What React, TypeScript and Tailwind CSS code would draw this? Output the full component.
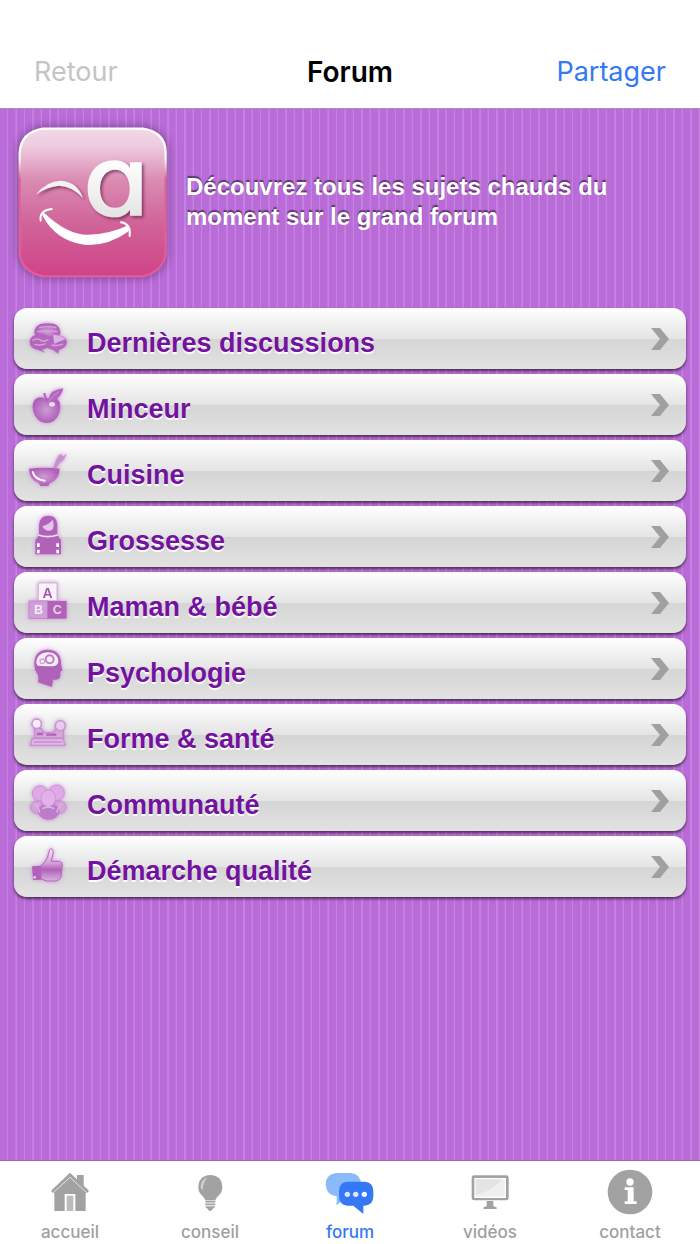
import type { ReactNode } from "react";

type Topic = { label: string; icon: ReactNode };
type Tab = { label: string; icon: ReactNode; active?: boolean };

function TopicIcon({ viewBox, children }: { viewBox: string; children: ReactNode }) {
  return (
    <svg
      viewBox={viewBox}
      aria-hidden="true"
      className="size-10 shrink-0 overflow-visible drop-shadow-[0_0_2px_#c88fd6]"
    >
      <g filter="url(#soften)">{children}</g>
    </svg>
  );
}

function TabIcon({ viewBox, children }: { viewBox: string; children: ReactNode }) {
  return (
    <svg viewBox={viewBox} aria-hidden="true" className="size-[46px] overflow-visible">
      {children}
    </svg>
  );
}

const topics: Topic[] = [
  {
    label: "Dernières discussions",
    icon: (
      <TopicIcon viewBox="85 56 120 120">
        <path d="M104 98q0-29 40-29q38 0 38 29q-6 22-38 22t-40-22z" fill="url(#orchid)" />
        <path d="M90 125q0-22 34-25q30 2 30 24q-2 20-28 24l12 10l-22-9q-26-4-26-24z" fill="#b468bd" />
        <path d="M138 126q4-22 32-22q32 2 32 22q-2 18-24 23l-2 11l-16-11q-22-3-22-23z" fill="#b468bd" />
        <path d="M160 104q22-2 38 12l-34 14z" fill="#dcb2e4" />
        <path
          d="M118 82q28-6 52 0M112 94q30-5 62 0M98 120q16-7 26 0t22-3M104 132q20 5 34-2M156 134q18 4 34-3"
          fill="none"
          stroke="#d5a6dc"
          strokeWidth="4"
        />
      </TopicIcon>
    ),
  },
  {
    label: "Minceur",
    icon: (
      <TopicIcon viewBox="85 254 120 120">
        <path
          d="M139 296q-20-12-34 2q-10 14-4 36q10 32 38 34q30 0 40-30q8-28-6-42q-16-9-34 0z"
          fill="url(#orchid)"
        />
        <path d="M148 304q-2-28 20-34q12-4 23-6q-2 12-10 22q-10 14-33 18z" fill="#b468bd" />
        <path d="M144 302q-8-8-10-24" fill="none" stroke="#b062b8" strokeWidth="6" />
        <path d="M148 302q14-20 30-28" fill="none" stroke="#d9a9e0" strokeWidth="2" />
        <ellipse cx="157" cy="312" rx="9" ry="7" fill="#eed8f2" />
      </TopicIcon>
    ),
  },
  {
    label: "Cuisine",
    icon: (
      <TopicIcon viewBox="85 44 120 120">
        <path d="M160 96l10-26l8-14l10-2l-2 8l16-10l-10 18l-14 12l-10 16z" fill="#c98fd0" />
        <path d="M88 97q44-6 92 0q-2 34-30 44l-4 8h-24l-4-8q-28-10-30-44z" fill="url(#orchid)" />
        <path d="M99 107q6 22 36 26" fill="none" stroke="#fff" strokeWidth="6" strokeLinecap="round" />
      </TopicIcon>
    ),
  },
  {
    label: "Grossesse",
    icon: (
      <TopicIcon viewBox="85 242 120 120">
        <path d="M118 296v-30q2-28 28-28t27 28v30l11 16v42h-77v-42z" fill="#b062b8" />
        <path d="M128 270q20-6 31-20q8 24-4 32q-16 6-27-12z" fill="#e6c5eb" />
        <path d="M116 296q28 10 58 0" fill="none" stroke="#f2e2f4" strokeWidth="5" />
        <path
          d="M112 321h8v11h-8zM112 340h8v11h-8zM170 321h8v11h-8zM170 340h8v11h-8z"
          fill="#fff"
        />
      </TopicIcon>
    ),
  },
  {
    label: "Maman & bébé",
    icon: (
      <TopicIcon viewBox="85 439 120 120">
        <rect x="116" y="439" width="56" height="53" fill="#faf2fb" stroke="#d7addd" strokeWidth="3" />
        <rect x="88" y="493" width="56" height="53" fill="#cf9fd8" stroke="#bd7dc6" strokeWidth="2" />
        <rect x="144" y="493" width="57" height="53" fill="#b062b8" />
        <g fontFamily="Liberation Sans, sans-serif" fontWeight="700" fontSize="42" textAnchor="middle">
          <text x="144" y="484" fill="#a357ae">A</text>
          <text x="117" y="533" fill="#f6ebf8" fontSize="38">B</text>
          <text x="173" y="533" fill="#ead0ee" fontSize="38">C</text>
        </g>
      </TopicIcon>
    ),
  },
  {
    label: "Psychologie",
    icon: (
      <TopicIcon viewBox="85 43 120 120">
        <path
          d="M104 88q0-42 40-43q40 1 40 42l4 20l-6 4v14q-2 10-12 10h-10l-3 22l-42-14q4-20-5-30q-6-10-6-25z"
          fill="#b062b8"
        />
        <path d="M110 86q0-32 36-33q30 2 30 28q-2 12-18 14h-16l-28-2z" fill="#f7edf8" />
        <circle cx="150" cy="74" r="12" fill="none" stroke="#bd7dc6" strokeWidth="6" />
        <circle cx="128" cy="80" r="7" fill="none" stroke="#d3a4db" strokeWidth="4" />
      </TopicIcon>
    ),
  },
  {
    label: "Forme & santé",
    icon: (
      <TopicIcon viewBox="85 241 120 120">
        <g stroke="#c78fcf" strokeWidth="4">
          <path d="M98 312h92l6 20H92z" fill="#dfb8e5" />
          <path d="M104 282h20l10 12h26l8-10h22l2 26h-86z" fill="#d5a6dc" />
          <circle cx="111" cy="267" r="14" fill="#f7eaf9" />
          <circle cx="182" cy="273" r="15" fill="#e8cbed" />
        </g>
        <path d="M112 298h18M140 300h30" stroke="#b062b8" strokeWidth="7" />
        <path d="M102 322h84" stroke="#c387cb" strokeWidth="4" />
      </TopicIcon>
    ),
  },
  {
    label: "Communauté",
    icon: (
      <TopicIcon viewBox="85 439 120 120">
        <g stroke="#c387cb" strokeWidth="2">
          <circle cx="112" cy="518" r="19" fill="#d5a2dc" />
          <circle cx="180" cy="518" r="19" fill="#d5a2dc" />
          <ellipse cx="147" cy="530" rx="32" ry="25" fill="#bd7bc9" />
          <circle cx="121" cy="476" r="23" fill="#dfa9e8" />
          <circle cx="171" cy="474" r="23" fill="#dfa9e8" />
          <ellipse cx="146" cy="491" rx="22" ry="25" fill="#e3b0ec" />
        </g>
        <path
          d="M104 508q14 8 16 26M188 508q-14 8-16 26M128 522q18-10 36 0"
          fill="none"
          stroke="#e0b8e7"
          strokeWidth="4"
        />
      </TopicIcon>
    ),
  },
  {
    label: "Démarche qualité",
    icon: (
      <TopicIcon viewBox="85 636 120 120">
        <path
          d="M124 692q14-10 20-26l6-22q4-6 9 0q4 10-5 35h26q8 2 8 12l-4 34q-4 12-16 13h-26l-18-6z"
          fill="url(#thumb)"
          stroke="#b468bd"
          strokeWidth="3"
        />
        <path d="M97 694l27-2v42l-24 1z" fill="#b062b8" />
        <circle cx="105" cy="727" r="4" fill="#e9d0ed" />
      </TopicIcon>
    ),
  },
];

const tabs: Tab[] = [
  {
    label: "accueil",
    icon: (
      <TabIcon viewBox="141 60 138 138">
        <path d="M231 78h20v36l-20-18z" fill="#a2a2a2" />
        <path d="M210 88l47 40v58h-94v-58z" fill="#a2a2a2" />
        <path d="M210 71l57 54l-5 6h-6l-46-42l-46 42h-6l-5-6z" fill="#a2a2a2" />
        <path d="M161 130l49-45l49 45" fill="none" stroke="#e4e4e4" strokeWidth="3" />
        <path d="M194 186v-51h32v51" fill="#fff" />
        <path d="M200 140h20v46h-20z" fill="#bcbcbc" />
      </TabIcon>
    ),
  },
  {
    label: "conseil",
    icon: (
      <TabIcon viewBox="561 60 138 138">
        <path
          d="M631 78q35 2 36 36q0 18-13 28q-7 6-8 12h-30q-1-6-8-12q-13-10-13-28q1-34 36-36z"
          fill="#a2a2a2"
        />
        <path d="M602 116q0-24 21-31q-14 14-15 38z" fill="#d0d0d0" />
        <path d="M616 158h30M616 166h30" stroke="#a2a2a2" strokeWidth="5" />
        <path d="M616 172h30q-2 6-8 7l-4 6h-7l-4-6q-6-1-7-7z" fill="#a2a2a2" />
      </TabIcon>
    ),
  },
  {
    label: "forum",
    active: true,
    icon: (
      <TabIcon viewBox="-69 60 138 138">
        <path
          d="M-40 72H2q30 2 31 34q-2 34-31 36h-20q-8 18-23 27q2-12 1-27q-32-4-33-36q1-32 33-34z"
          fill="#8abafa"
        />
        <path
          d="M-8 98h52q26 2 26 28v16q0 26-26 28h-4v25l-30-25H-8q-25-2-25-28v-16q0-26 25-28z"
          fill="#3478f6"
        />
        <g fill="#d9e7fe">
          <circle cx="-8" cy="136" r="8" />
          <circle cx="17" cy="136" r="8" />
          <circle cx="43" cy="136" r="8" fill="#fff" />
        </g>
      </TabIcon>
    ),
  },
  {
    label: "vidéos",
    icon: (
      <TabIcon viewBox="346 60 138 138">
        <rect x="360" y="79" width="111" height="75" rx="7" fill="#a2a2a2" />
        <rect x="368" y="87" width="95" height="60" fill="#fff" />
        <rect x="372" y="91" width="87" height="52" fill="#efefef" />
        <path d="M372 91h78q-24 34-78 47z" fill="#e4e4e4" />
        <path d="M405 156h20v14q2 4 10 5v5h-40v-5q8-1 10-5z" fill="#a2a2a2" />
      </TabIcon>
    ),
  },
  {
    label: "contact",
    icon: (
      <TabIcon viewBox="769 60 138 138">
        <circle cx="838" cy="129" r="67" fill="#a2a2a2" />
        <circle cx="838" cy="99" r="11" fill="#fff" />
        <path d="M822 115h27v42h9v8h-36v-8h9v-34h-9z" fill="#fff" />
      </TabIcon>
    ),
  },
];

function Logo() {
  return (
    <svg
      viewBox="55 80 450 450"
      role="img"
      aria-label="Logo"
      className="size-[150px] shrink-0 overflow-visible drop-shadow-[0_0_5px_#00000066]"
    >
      <defs>
        <linearGradient id="face" x1="0" y1="0" x2="0" y2="1">
          <stop offset="0" stopColor="#f2d9e8" />
          <stop offset="0.12" stopColor="#edcbdf" />
          <stop offset="0.35" stopColor="#da8bb2" />
          <stop offset="0.65" stopColor="#d06398" />
          <stop offset="1" stopColor="#cf4388" />
        </linearGradient>
        <linearGradient id="rim" x1="0" y1="0" x2="0" y2="1">
          <stop offset="0" stopColor="#fff" />
          <stop offset="0.2" stopColor="#fff" stopOpacity="0.9" />
          <stop offset="0.34" stopColor="#e0609d" />
          <stop offset="1" stopColor="#e55aa0" />
        </linearGradient>
        <linearGradient id="letter" x1="0" y1="0" x2="0" y2="1">
          <stop offset="0" stopColor="#fff" />
          <stop offset="1" stopColor="#e4e4e4" />
        </linearGradient>
        <filter id="lift" x="-20%" y="-20%" width="150%" height="150%">
          <feDropShadow dx="6" dy="6" stdDeviation="4" floodColor="#6b1f48" floodOpacity="0.7" />
        </filter>
      </defs>
      <path
        d="M130 85H430Q497 96 498 156V460Q490 514 430 528H130Q66 514 60 460V156Q64 96 130 85z"
        fill="url(#face)"
        stroke="url(#rim)"
        strokeWidth="7"
      />
      <g filter="url(#lift)">
        <path
          fillRule="evenodd"
          fill="url(#letter)"
          d="M345 180C368 180 382 190 391 203V186H426V346H391V328C381 342 366 351 345 351C296 351 264 316 264 266C264 214 296 180 345 180zM347 208C318 208 301 232 301 265C301 299 318 322 347 322C374 322 390 299 390 265C390 232 374 208 347 208z"
        />
        <path d="M108 283Q142 241 184 241Q232 244 250 293Q218 257 178 256Q142 259 108 283z" fill="#f6f2f4" />
      </g>
      <path d="M130 334Q202 404 266 403Q326 403 388 374L387 393Q326 437 260 434Q170 425 128 345z" fill="#fff" />
      <path
        d="M123 361Q118 330 156 326M364 366Q394 370 390 407"
        fill="none"
        stroke="#fff"
        strokeWidth="6"
        strokeLinecap="round"
      />
    </svg>
  );
}

function Chevron() {
  return (
    <svg viewBox="0 0 18 22" aria-hidden="true" className="h-[22px] w-[18px] shrink-0">
      <path d="M0 0h9l9 11l-9 11H0l9-11z" fill="#a0a0a0" />
    </svg>
  );
}

export default function App() {
  return (
    <div className="flex min-h-screen flex-col bg-[#b96bd7] bg-[repeating-linear-gradient(90deg,#b96bd7_0px,#b96bd7_calc(100%/83-2px),#c583e1_calc(100%/83-1px),#c583e1_calc(100%/83))]">
      <svg aria-hidden="true" className="absolute size-0">
        <defs>
          <filter id="soften" x="-10%" y="-10%" width="120%" height="120%">
            <feGaussianBlur stdDeviation="2.2" />
          </filter>
          <radialGradient id="orchid">
            <stop offset="0" stopColor="#cf9bd6" />
            <stop offset="1" stopColor="#ae5fb7" />
          </radialGradient>
          <linearGradient id="thumb" x1="0" y1="0" x2="0" y2="1">
            <stop offset="0" stopColor="#f6eaf8" />
            <stop offset="0.45" stopColor="#d3a0da" />
            <stop offset="0.65" stopColor="#b062b8" />
            <stop offset="1" stopColor="#dcb2e3" />
          </linearGradient>
        </defs>
      </svg>

      <header className="grid grid-cols-3 items-center border-b border-[#a98fb4] bg-white px-[34px] pt-9 font-[Inter,sans-serif] text-[27px] leading-[72px]">
        <button type="button" disabled className="justify-self-start text-[#c4c4c6]">
          Retour
        </button>
        <h1 className="justify-self-center text-[28px] font-semibold text-black">Forum</h1>
        <button type="button" className="justify-self-end text-[#3478f6]">
          Partager
        </button>
      </header>

      <main className="flex-1 font-['Liberation_Sans',Arial,sans-serif] font-bold">
        <section className="flex items-center gap-[18px] px-[18px] pt-[18px]">
          <Logo />
          <p className="max-w-[440px] text-[24px] leading-[30px] text-white [text-shadow:0_-2px_1px_#00000080]">
            Découvrez tous les sujets chauds du moment sur le grand forum
          </p>
        </section>

        <ul className="mt-[31px] flex flex-col gap-[5px] px-[14px]">
          {topics.map((topic) => (
            <li key={topic.label}>
              <a
                href="#"
                className="flex h-[61px] items-center rounded-[13px] bg-[linear-gradient(#ffffff,#e4e4e4_50%,#d5d5d5_51%,#e2e2e2)] pr-[17px] pl-[14px] shadow-[0_2px_3px_#00000099]"
              >
                {topic.icon}
                <span className="flex-1 pt-2 pl-[19px] text-[27px] leading-8 text-[#7412a0] [text-shadow:0_2px_0_#ffffff]">
                  {topic.label}
                </span>
                <Chevron />
              </a>
            </li>
          ))}
        </ul>
      </main>

      <nav className="grid grid-cols-5 border-t border-[#a466bd] bg-white pt-2 font-[Inter,sans-serif] text-[17px] leading-6 font-medium">
        {tabs.map((tab) => (
          <a
            key={tab.label}
            href="#"
            aria-current={tab.active ? "page" : undefined}
            className={
              tab.active
                ? "flex flex-col items-center gap-[5px] text-[#3478f6]"
                : "flex flex-col items-center gap-[5px] text-[#a0a0a0]"
            }
          >
            {tab.icon}
            <span>{tab.label}</span>
          </a>
        ))}
      </nav>
    </div>
  );
}
